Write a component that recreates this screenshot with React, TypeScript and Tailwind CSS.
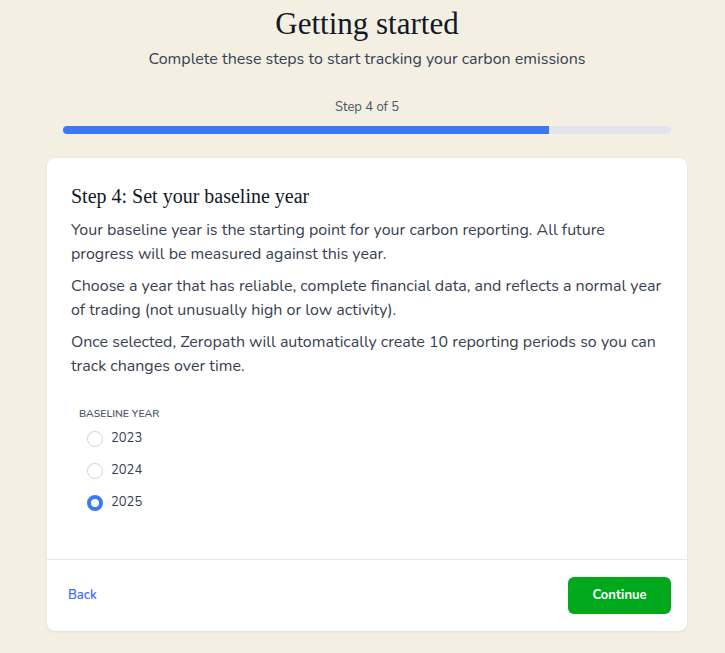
import { useState } from 'react';

const years = ['2023', '2024', '2025'];

export default function App() {
  const [year, setYear] = useState('2025');
  const step = 4;
  const total = 5;

  return (
    <div className="min-h-screen bg-[#f3f0e3] font-['Nunito','Noto_Sans',sans-serif] text-[#374151]">
      <div className="w-[640px] ml-[47px] pt-[5px]">

        {/* Header */}
        <div className="text-center">
          <h1 className="font-['Liberation_Serif',serif] text-[31px] leading-[38px] text-[#111827]">
            Getting started
          </h1>
          <p className="mt-[4px] text-[16px] leading-6 text-[#374151]">
            Complete these steps to start tracking your carbon emissions
          </p>
        </div>

        {/* Progress */}
        <div className="px-4 mt-[28px]">
          <div className="text-center text-[13px] leading-4 text-[#4b5563]">Step {step} of {total}</div>
          <div className="mt-[11px] h-2 rounded-full bg-[#e2e5ee] overflow-hidden">
            <div className="h-full bg-[#3b78f8]" style={{ width: `${(step / total) * 100}%` }} />
          </div>
        </div>

        {/* Card */}
        <div className="mt-6 bg-white rounded-lg shadow-[0_1px_3px_rgba(0,0,0,0.08)]">
          <div className="px-6 pt-6 pb-[48px]">
            <h2 className="font-['Liberation_Serif',serif] text-[20px] leading-7 text-[#111827]">
              Step 4: Set your baseline year
            </h2>
            <div className="mt-2 flex flex-col gap-2 text-[16px] leading-6">
              <p>
                Your baseline year is the starting point for your carbon reporting. All future
                progress will be measured against this year.
              </p>
              <p>
                Choose a year that has reliable, complete financial data, and reflects a normal year
                of trading (not unusually high or low activity).
              </p>
              <p>
                Once selected, Zeropath will automatically create 10 reporting periods so you can
                track changes over time.
              </p>
            </div>

            <div className="mt-[28px] pl-2">
              <div className="text-[10.5px] leading-4 font-semibold uppercase text-[#4b5563]">Baseline year</div>
              <div className="mt-[9px] pl-2 flex flex-col gap-4">
                {years.map(y => {
                  const checked = y === year;
                  return (
                    <label key={y} className="flex items-center gap-2 h-4 cursor-pointer" onClick={() => setYear(y)}>
                      <span
                        className={
                          checked
                            ? 'w-4 h-4 rounded-full border-[4px] border-[#3b78f8] bg-white'
                            : 'w-4 h-4 rounded-full border border-[#d1d5db] bg-white'
                        }
                      />
                      <span className="text-[13px] text-[#374151]">{y}</span>
                    </label>
                  );
                })}
              </div>
            </div>
          </div>

          {/* Footer */}
          <div className="border-t border-[#e5e7eb] pl-[21px] pr-4 py-[17px] flex items-center justify-between">
            <button className="text-[13px] font-semibold text-[#3b6ef5]">Back</button>
            <button className="w-[103px] h-[37px] rounded-md bg-[#00a91b] text-white text-[13px] font-bold">
              Continue
            </button>
          </div>
        </div>
      </div>
    </div>
  );
}
